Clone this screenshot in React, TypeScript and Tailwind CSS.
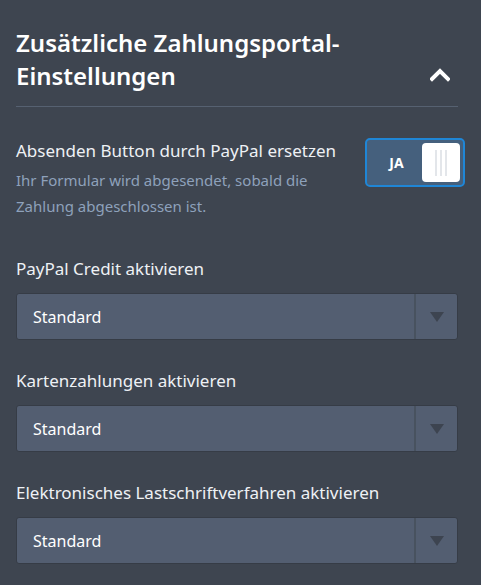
import React from "react";

function Select() {
  return (
    <div className="flex h-[47px] w-full items-stretch rounded-[3px] border border-[#363c46] bg-[#535e71]">
      <div className="flex flex-1 items-center pl-[16px] text-[16px] text-white">Standard</div>
      <div className="w-[2px] bg-[#48525f]" />
      <div className="flex w-[41px] items-center justify-center">
        <svg width="14" height="10" viewBox="0 0 14 10">
          <path d="M0 0 L14 0 L7 10 Z" fill="#3d4450" />
        </svg>
      </div>
    </div>
  );
}

function Field({ label }: { label: string }) {
  return (
    <div className="flex flex-col">
      <div className="text-[17px] leading-[24px] text-[#eef1f5]">{label}</div>
      <div className="mt-[12px]">
        <Select />
      </div>
    </div>
  );
}

export default function App() {
  return (
    <div
      className="h-[585px] w-[481px] bg-[#3e4550] pl-[16px]"
      style={{ fontFamily: '"Noto Sans", "Open Sans", sans-serif' }}
    >
      <div className="w-[442px]">
        <div className="flex items-end justify-between pt-[26px] pb-[14px] border-b border-[#566171]">
          <div className="text-[24px] font-semibold leading-[33px] text-white">
            Zusätzliche Zahlungsportal-
            <br />
            Einstellungen
          </div>
          <div className="mb-[10px] mr-[8px]">
            <svg width="20" height="14" viewBox="0 0 20 14">
              <path d="M2 11 L10 3 L18 11" stroke="white" strokeWidth="4" fill="none" strokeLinecap="square" />
            </svg>
          </div>
        </div>

        <div className="mt-[32px] flex items-start justify-between">
          <div className="flex flex-col">
            <div className="text-[17px] leading-[24px] text-[#eef1f5]">Absenden Button durch PayPal ersetzen</div>
            <div className="mt-[4px] text-[15px] leading-[26px] text-[#8ea1bb]">
              Ihr Formular wird abgesendet, sobald die
              <br />
              Zahlung abgeschlossen ist.
            </div>
          </div>
          <div className="mr-[-7px] mt-[-1px] flex h-[49px] w-[100px] shrink-0 items-center rounded-[5px] border-2 border-[#1f86d6] bg-[#45607d] pr-[3px]">
            <div className="flex-1 pl-[4px] text-center text-[14px] font-bold text-white">JA</div>
            <div className="flex h-[39px] w-[38px] items-center justify-center gap-[3px] rounded-[4px] bg-white">
              <div className="h-[26px] w-[2px] bg-[#e3e6ea]" />
              <div className="h-[26px] w-[2px] bg-[#e3e6ea]" />
              <div className="h-[26px] w-[2px] bg-[#e3e6ea]" />
            </div>
          </div>
        </div>

        <div className="mt-[38px] flex flex-col gap-[29px]">
          <Field label="PayPal Credit aktivieren" />
          <Field label="Kartenzahlungen aktivieren" />
          <Field label="Elektronisches Lastschriftverfahren aktivieren" />
        </div>
      </div>
    </div>
  );
}
